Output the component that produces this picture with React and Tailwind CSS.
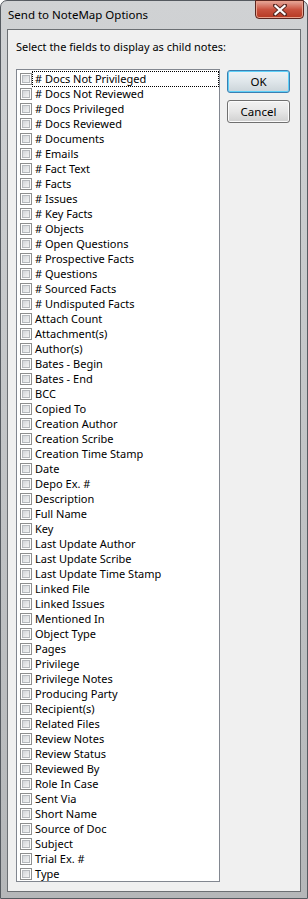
const fields = [
  '# Docs Not Privileged',
  '# Docs Not Reviewed',
  '# Docs Privileged',
  '# Docs Reviewed',
  '# Documents',
  '# Emails',
  '# Fact Text',
  '# Facts',
  '# Issues',
  '# Key Facts',
  '# Objects',
  '# Open Questions',
  '# Prospective Facts',
  '# Questions',
  '# Sourced Facts',
  '# Undisputed Facts',
  'Attach Count',
  'Attachment(s)',
  'Author(s)',
  'Bates - Begin',
  'Bates - End',
  'BCC',
  'Copied To',
  'Creation Author',
  'Creation Scribe',
  'Creation Time Stamp',
  'Date',
  'Depo Ex. #',
  'Description',
  'Full Name',
  'Key',
  'Last Update Author',
  'Last Update Scribe',
  'Last Update Time Stamp',
  'Linked File',
  'Linked Issues',
  'Mentioned In',
  'Object Type',
  'Pages',
  'Privilege',
  'Privilege Notes',
  'Producing Party',
  'Recipient(s)',
  'Related Files',
  'Review Notes',
  'Review Status',
  'Reviewed By',
  'Role In Case',
  'Sent Via',
  'Short Name',
  'Source of Doc',
  'Subject',
  'Trial Ex. #',
  'Type',
];

function CheckBox() {
  return (
    <span className="w-[12px] h-[12px] shrink-0 border border-[#8e8f8f] bg-white p-[1px] flex">
      <span className="flex-1 border border-[#b6b9bd] bg-gradient-to-br from-[#d3d6da] to-[#f4f4f4]" />
    </span>
  );
}

function FieldRow({ label, focused }) {
  return (
    <div className="h-[15px] flex items-center pl-[3px]">
      <CheckBox />
      <span
        className={
          focused
            ? 'ml-[1px] mr-[1px] flex-1 h-[14px] leading-[14px] pl-[2px] outline outline-1 outline-dotted outline-black'
            : 'ml-[1px] mr-[1px] flex-1 h-[14px] leading-[14px] pl-[2px]'
        }
      >
        {label}
      </span>
    </div>
  );
}

function WinButton({ children, isDefault }) {
  return (
    <button
      className={
        isDefault
          ? 'w-[63px] h-[23px] rounded-[3px] border border-[#3c7fb1] shadow-[inset_0_0_0_1px_#5fd0f8] bg-gradient-to-b from-[#eef3f6] via-[#dfe6ea] to-[#cbd4d9] text-[11.5px] text-black'
          : 'w-[63px] h-[23px] rounded-[3px] border border-[#707070] shadow-[inset_0_0_0_1px_#fbfbfb] bg-gradient-to-b from-[#f2f2f2] via-[#e6e6e6] to-[#d0d0d0] text-[11.5px] text-black'
      }
    >
      {children}
    </button>
  );
}

export default function App() {
  return (
    <div
      className="w-[308px] h-[899px] flex flex-col rounded-t-[7px] border border-[#555a60] bg-gradient-to-b from-[#d0d2d4] via-[#c2c4c6] to-[#b5b7b9] text-black"
      style={{ fontFamily: '"Segoe UI", "Noto Sans", sans-serif' }}
    >
      {/* Title bar */}
      <div className="h-[28px] relative flex items-center pl-[7px]">
        <span className="text-[11.5px] text-black">Send to NoteMap Options</span>
        <div className="absolute top-[-1px] right-[3px] w-[49px] h-[19px] rounded-b-[4px] border border-[#5b2620] bg-gradient-to-b from-[#e5a89c] via-[#c9523f] to-[#b53821] flex items-center justify-center shadow-[inset_0_0_0_1px_#e8a08c]">
          <svg width="14" height="12" viewBox="0 0 14 12">
            <path d="M2 1.5 L12 10.5 M12 1.5 L2 10.5" stroke="#5a2a22" strokeWidth="4.2" strokeLinecap="square" />
            <path d="M2.5 2 L11.5 10 M11.5 2 L2.5 10" stroke="#ffffff" strokeWidth="2.3" strokeLinecap="square" />
          </svg>
        </div>
      </div>

      {/* Client area */}
      <div className="flex-1 mx-[6px] mb-[6px] border border-[#6b6f73] bg-[#f0f0f0] pl-[8px] pt-[9px]">
        <p className="text-[11px] leading-[15px]">Select the fields to display as child notes:</p>
        <div className="mt-[15px] flex gap-[7px]">
          <div className="w-[204px] h-[813px] border border-[#828790] bg-white text-[11px] pt-[1px]">
            {fields.map((f, i) => (
              <FieldRow key={f} label={f} focused={i === 0} />
            ))}
          </div>
          <div className="flex flex-col gap-[7px] pt-[1px]">
            <WinButton isDefault>OK</WinButton>
            <WinButton>Cancel</WinButton>
          </div>
        </div>
      </div>
    </div>
  );
}
